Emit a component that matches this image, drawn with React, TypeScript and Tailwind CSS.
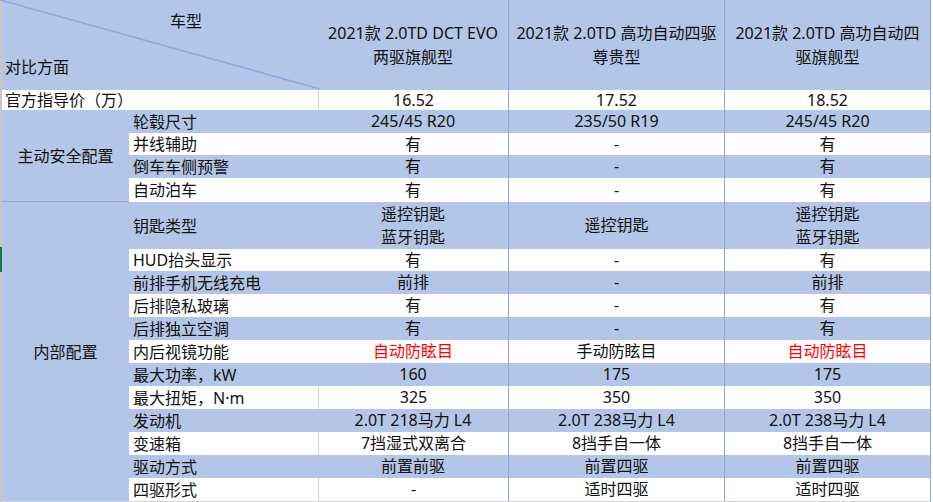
import React from "react";

type Row = {
  label: string;
  h: string;
  bg: "blue" | "white";
  vals: React.ReactNode[];
  grayLine?: boolean;
};

const red = (t: string) => <span className="text-[#ff0000]">{t}</span>;

const rows: Row[] = [
  { label: "轮毂尺寸", h: "h-[23px]", bg: "blue", vals: ["245/45 R20", "235/50 R19", "245/45 R20"] },
  { label: "并线辅助", h: "h-[22px]", bg: "white", vals: ["有", "-", "有"] },
  { label: "倒车车侧预警", h: "h-[23px]", bg: "blue", vals: ["有", "-", "有"] },
  { label: "自动泊车", h: "h-[24px]", bg: "white", vals: ["有", "-", "有"] },
  {
    label: "钥匙类型",
    h: "h-[47px]",
    bg: "blue",
    vals: [
      <>遥控钥匙<br />蓝牙钥匙</>,
      "遥控钥匙",
      <>遥控钥匙<br />蓝牙钥匙</>,
    ],
  },
  { label: "HUD抬头显示", h: "h-[22px]", bg: "white", vals: ["有", "-", "有"] },
  { label: "前排手机无线充电", h: "h-[23px]", bg: "blue", vals: ["前排", "-", "前排"] },
  { label: "后排隐私玻璃", h: "h-[23px]", bg: "white", vals: ["有", "-", "有"] },
  { label: "后排独立空调", h: "h-[23px]", bg: "blue", vals: ["有", "-", "有"] },
  { label: "内后视镜功能", h: "h-[23px]", bg: "white", vals: [red("自动防眩目"), "手动防眩目", red("自动防眩目")] },
  { label: "最大功率，kW", h: "h-[23px]", bg: "blue", vals: ["160", "175", "175"] },
  { label: "最大扭矩，N·m", h: "h-[23px]", bg: "white", vals: ["325", "350", "350"], grayLine: true },
  { label: "发动机", h: "h-[23px]", bg: "blue", vals: ["2.0T 218马力 L4", "2.0T 238马力 L4", "2.0T 238马力 L4"] },
  { label: "变速箱", h: "h-[23px]", bg: "white", vals: ["7挡湿式双离合", "8挡手自一体", "8挡手自一体"], grayLine: true },
  { label: "驱动方式", h: "h-[23px]", bg: "blue", vals: ["前置前驱", "前置四驱", "前置四驱"] },
  { label: "四驱形式", h: "h-[23px]", bg: "white", vals: ["-", "适时四驱", "适时四驱"], grayLine: true },
];

function DataRow({ r }: { r: Row }) {
  const bg = r.bg === "blue" ? "bg-[#b4c6e7]" : "bg-white";
  return (
    <div className={`flex ${r.h}`}>
      <div className={`w-[189px] ${bg} flex items-center pl-[4px] whitespace-nowrap`}>{r.label}</div>
      <div
        className={`w-[190px] ${bg} flex items-center justify-center text-center leading-[23px] whitespace-nowrap ${
          r.grayLine ? "border-l border-[#d4d4d4]" : ""
        }`}
      >
        <div>{r.vals[0]}</div>
      </div>
      <div className={`w-[216px] ${bg} border-l border-[#8eaadb] flex items-center justify-center text-center leading-[23px] whitespace-nowrap`}>
        <div>{r.vals[1]}</div>
      </div>
      <div className={`w-[206px] ${bg} border-l border-[#8eaadb] flex items-center justify-center text-center leading-[23px] whitespace-nowrap`}>
        <div>{r.vals[2]}</div>
      </div>
    </div>
  );
}

export default function App() {
  return (
    <div
      className="w-[933px] h-[502px] overflow-hidden flex bg-white text-[16px] text-[#111] leading-[20px]"
      style={{ fontFamily: "'Noto Sans', 'Noto Sans CJK SC', sans-serif" }}
    >
      {/* left excel strip */}
      <div className="w-[2px] flex flex-col shrink-0">
        <div className="h-[247px] bg-[#c6c6c6]" />
        <div className="h-[25px] bg-[#217346]" />
        <div className="flex-1 bg-[#c6c6c6]" />
      </div>

      {/* table body */}
      <div className="w-[928px] flex flex-col shrink-0">
        {/* header */}
        <div className="flex h-[90px] bg-[#b4c6e7]">
          <div className="relative w-[316px]">
            <svg className="absolute left-[-2px] top-0" width="320" height="91" viewBox="0 0 320 91">
              <line x1="0" y1="0" x2="320" y2="89" stroke="#8eaadb" strokeWidth="1.6" />
            </svg>
            <div className="absolute left-[168px] top-[11px]">车型</div>
            <div className="absolute left-[3px] top-[57px]">对比方面</div>
          </div>
          <div className="w-[190px] flex items-center justify-center text-center leading-[24px] whitespace-nowrap">
            <div>
              2021款 2.0TD DCT EVO
              <br />
              两驱旗舰型
            </div>
          </div>
          <div className="w-[216px] border-l border-[#8eaadb] flex items-center justify-center text-center leading-[24px] whitespace-nowrap">
            <div>
              2021款 2.0TD 高功自动四驱
              <br />
              尊贵型
            </div>
          </div>
          <div className="w-[206px] border-l border-[#8eaadb] flex items-center justify-center text-center leading-[24px] whitespace-nowrap">
            <div>
              2021款 2.0TD 高功自动四
              <br />
              驱旗舰型
            </div>
          </div>
        </div>

        {/* price row */}
        <div className="flex h-[20px] bg-white">
          <div className="w-[316px] flex items-center pl-[3px] whitespace-nowrap">官方指导价（万）</div>
          <div className="w-[190px] border-l border-[#d4d4d4] flex items-center justify-center">16.52</div>
          <div className="w-[216px] border-l border-[#8eaadb] flex items-center justify-center">17.52</div>
          <div className="w-[206px] border-l border-[#8eaadb] flex items-center justify-center">18.52</div>
        </div>

        {/* body */}
        <div className="flex">
          <div className="w-[127px] flex flex-col">
            <div className="h-[92px] bg-[#b4c6e7] border-b border-[#8eaadb] flex items-center justify-center whitespace-nowrap">
              主动安全配置
            </div>
            <div className="h-[299px] bg-[#b4c6e7] flex items-center justify-center whitespace-nowrap">内部配置</div>
          </div>
          <div className="flex flex-col">
            {rows.map((r, i) => (
              <DataRow key={i} r={r} />
            ))}
          </div>
        </div>
        <div className="h-[1px] bg-[#d4d4d4]" />
      </div>

      {/* right edge */}
      <div className="w-[3px] shrink-0 border-l border-[#8eaadb] bg-white" />
    </div>
  );
}
